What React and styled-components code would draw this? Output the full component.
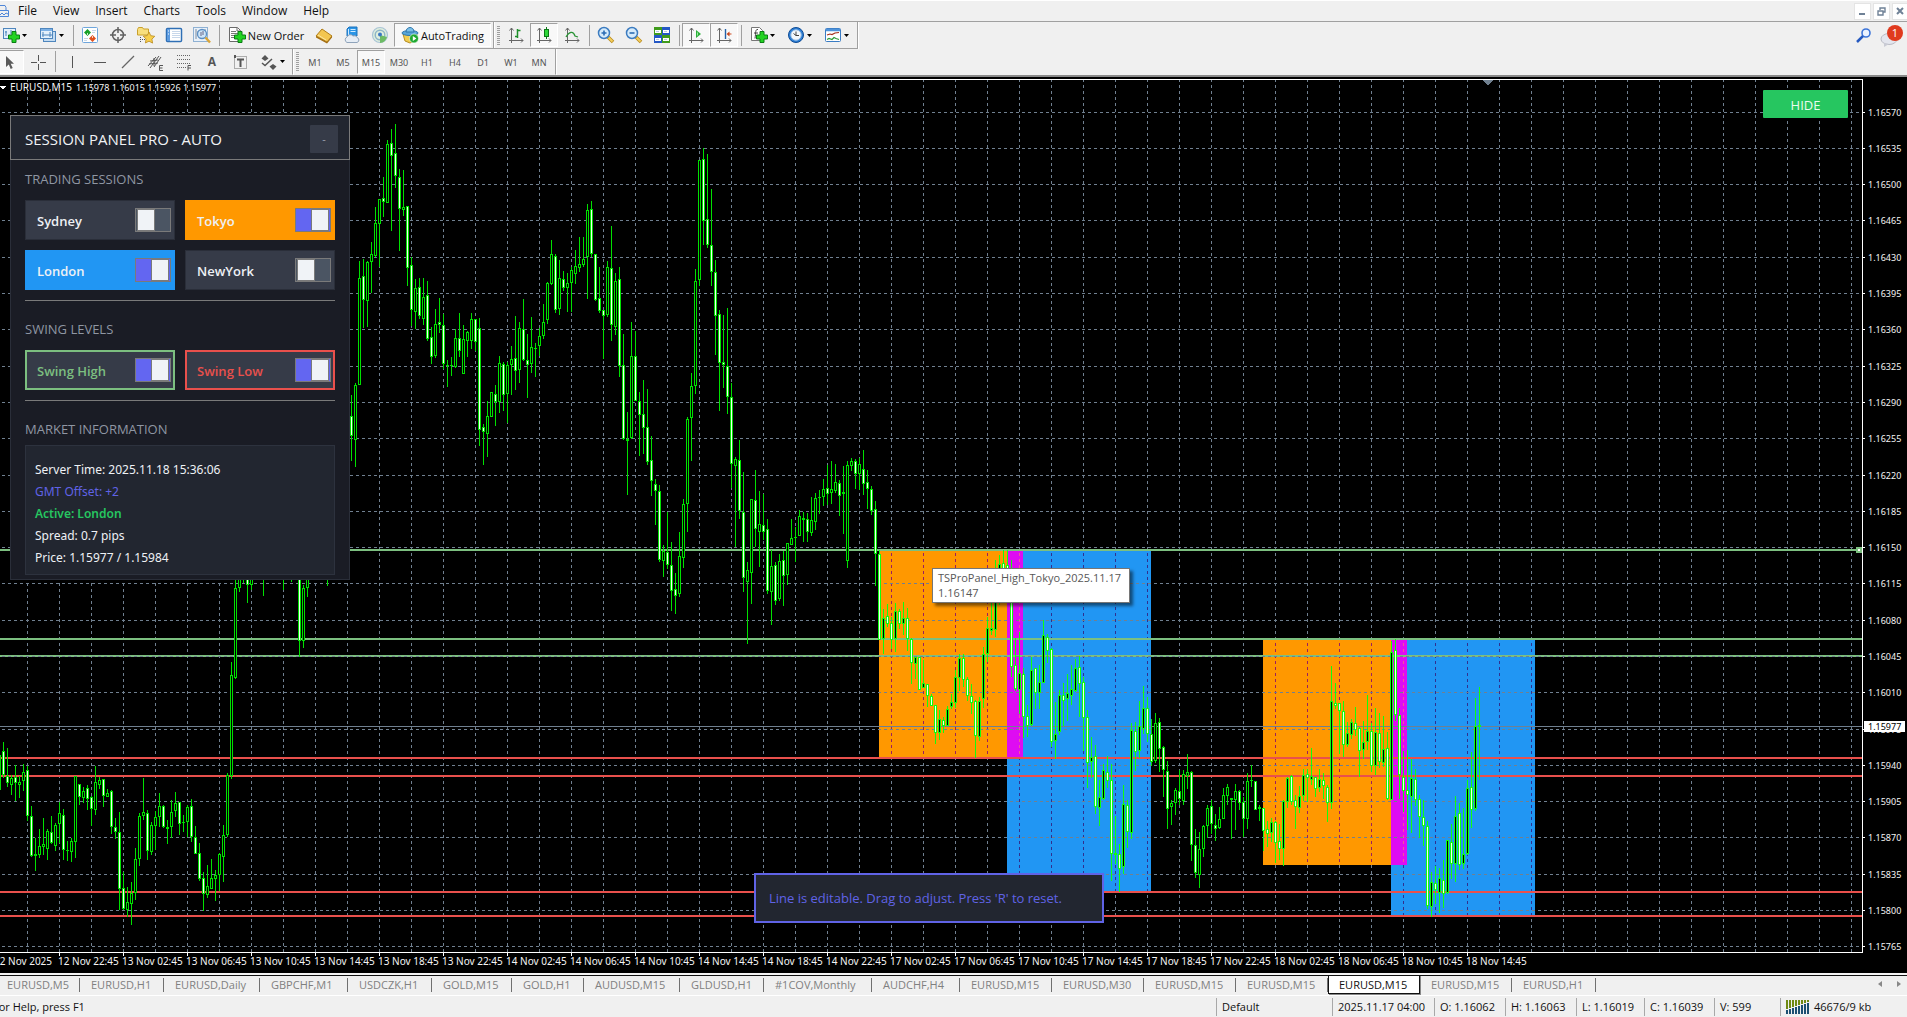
import React, { useState } from "react";
import styled, { createGlobalStyle, css } from "styled-components";

const GlobalStyle = createGlobalStyle`
  * {
    box-sizing: border-box;
  }
  body {
    margin: 0;
    background: #f0f0f0;
    font-family: "Open Sans", "Noto Sans", sans-serif;
    overflow: hidden;
  }
  button, input {
    font-family: inherit;
    margin: 0;
  }
`;

/////////////////////////////////////////////////////
// layout

const Window = styled.div`
  display: flex;
  flex-direction: column;
  height: 100vh;
  background: #f0f0f0;
  color: #111;
`;

const MenuBar = styled.nav`
  display: flex;
  align-items: center;
  height: 22px;
  border-top: 1px solid #fff;
  border-bottom: 1px solid #a0a0a0;
`;

const MenuItem = styled.button`
  border: none;
  background: transparent;
  padding: 0 8px;
  font-size: 12px;
  line-height: 16px;
  color: #111;
`;

const WindowButtons = styled.div`
  display: flex;
  gap: 2px;
  margin-left: auto;
  margin-right: -2px;
`;

const WindowButton = styled.button`
  display: flex;
  align-items: center;
  justify-content: center;
  width: 17px;
  height: 17px;
  padding: 0;
  border: 1px solid #e4e4e4;
  background: #fff;
`;

const ToolRow = styled.div`
  display: flex;
  align-items: center;
  height: ${p => p.$h || 27}px;
`;

const ToolGroup = styled.div`
  display: flex;
  align-items: center;
  height: ${p => (p.$flat ? 26 : 27)}px;
  padding-right: 2px;
  border-right: 1px solid #a0a0a0;
  border-bottom: 1px solid ${p => (p.$flat ? "transparent" : "#a0a0a0")};
  box-shadow: 1px 0 0 #fff;
`;

const pressed = css`
  background: #f8f8f8;
  border-color: #a0a0a0 #fff #fff #a0a0a0;
`;

const ToolButton = styled.button`
  display: flex;
  align-items: center;
  justify-content: center;
  flex: none;
  gap: 2px;
  width: ${p => p.$w || 28}px;
  height: 24px;
  padding: 0;
  border: 1px solid transparent;
  background: transparent;
  color: #111;
  font-size: 11px;
  white-space: nowrap;
  ${p => p.$on && pressed}
`;

const FrameButton = styled(ToolButton)`
  padding-top: 1px;
  color: #555;
  font-size: 9px;
  font-family: "Noto Sans", sans-serif;
`;

const LetterButton = styled(ToolButton)`
  color: #555;
  font-size: 12px;
  font-weight: 700;
`;

const Sep = styled.span`
  width: 1px;
  height: 21px;
  margin: 0 2px 0 3px;
  background: #a0a0a0;
`;

const Grip = styled.span`
  width: 3px;
  height: 19px;
  margin: 0 2px 0 3px;
  background: repeating-linear-gradient(#a0a0a0 0 1px, #f0f0f0 1px 2px);
`;

const TopRight = styled.div`
  display: flex;
  align-items: center;
  margin-left: auto;
  padding-right: 2px;
`;

const CutLeft = styled.div`
  display: flex;
  align-items: center;
  margin-left: -4px;
`;

const Chart = styled.main`
  position: relative;
  flex: 1;
  display: flex;
  flex-direction: column;
  min-height: 0;
  overflow: hidden;
  background: #000;
  border-top: 2px solid #8a8a8a;
`;

const Plot = styled.svg`
  display: block;
  width: 100%;
  flex: 1;
  shape-rendering: crispEdges;
  text {
    font-family: "Noto Sans", sans-serif;
    font-size: 9px;
    fill: #f4f4f4;
  }
  text.big {
    font-size: 10px;
  }
  text.tag {
    fill: #000;
  }
`;

const Tabs = styled.div`
  display: flex;
  align-items: flex-start;
  height: 23px;
  margin-left: -4px;
  border-top: 2px solid #f4f4f4;
  box-shadow: inset 0 1px 0 #111;
  border-bottom: 1px solid #fff;
`;

const Tab = styled.button`
  position: relative;
  flex: none;
  width: ${p => p.$w}px;
  height: ${p => (p.$on ? 19 : 20)}px;
  padding: 0 0 0 10px;
  border: 1px solid ${p => (p.$on ? "#111" : "transparent")};
  background: ${p => (p.$on ? "#fff" : "transparent")};
  color: ${p => (p.$on ? "#111" : "#808080")};
  font-size: 11px;
  line-height: 16px;
  text-align: left;
  white-space: nowrap;
  box-shadow: ${p => (p.$on ? "1px 1px 0 #888" : "none")};
  &::after {
    content: "";
    position: absolute;
    right: -1px;
    top: 2px;
    width: 1px;
    height: 14px;
    background: ${p => (p.$on ? "transparent" : "#707070")};
  }
`;

const TabArrows = styled.div`
  display: flex;
  gap: 15px;
  margin: 6px 6px 0 auto;
`;

const Status = styled.footer`
  display: flex;
  align-items: center;
  height: 21px;
  padding-top: 1px;
  font-size: 11px;
  line-height: 16px;
`;

const StatusText = styled.span`
  flex: 1;
  margin-left: -7px;
`;

const StatusCell = styled.span`
  display: flex;
  align-items: center;
  gap: 4px;
  flex: none;
  width: ${p => p.$w}px;
  height: 18px;
  padding-left: 5px;
  border-left: 1px solid #a8a8a8;
  white-space: nowrap;
`;

/////////////////////////////////////////////////////
// things lying over the chart

const Panel = styled.section`
  position: absolute;
  left: 10px;
  top: 38px;
  width: 340px;
  background: #1a1c25;
  border: 1px solid #2a2e39;
  border-top: none;
  padding-bottom: 4px;
`;

const PanelHead = styled.header`
  display: flex;
  align-items: center;
  justify-content: space-between;
  height: 45px;
  margin: 0 -1px;
  padding: 2px 11px 0 14px;
  background: #222630;
  border: 1px solid #7a7a7a;
`;

const PanelTitle = styled.h1`
  margin: 0;
  font-size: 15px;
  line-height: 20px;
  font-weight: 500;
  color: #f0f2f5;
`;

const Collapse = styled.button`
  width: 28px;
  height: 28px;
  padding: 0;
  border: none;
  border-radius: 1px;
  background: #363b48;
  color: #9aa2ae;
  font-size: 11px;
`;

const Group = styled.div`
  margin: 0 14px;
  padding: 0 0 ${p => (p.$last ? 0 : 10)}px;
  border-bottom: ${p => (p.$last ? "none" : "1px solid #7a7a7a")};
`;

const GroupTitle = styled.h2`
  display: flex;
  align-items: flex-end;
  margin: 0;
  height: ${p => p.$h}px;
  padding-bottom: ${p => p.$low}px;
  font-size: 13px;
  line-height: 20px;
  font-weight: 400;
  color: #8f96a3;
`;

const Tiles = styled.div`
  display: grid;
  grid-template-columns: 1fr 1fr;
  gap: 10px;
`;

const Tile = styled.label`
  display: flex;
  align-items: center;
  justify-content: space-between;
  height: 40px;
  padding: 0 ${p => (p.$line ? 2 : 3)}px 0 ${p => (p.$line ? 10 : 11)}px;
  background: ${p => p.$bg || "#363b48"};
  border: ${p => (p.$line ? `2px solid ${p.$line}` : `1px solid ${p.$bg || "#2a2e39"}`)};
  color: ${p => p.$line || "#eef1f5"};
  font-size: 13px;
  font-weight: 600;
`;

const TileName = styled.span`
  padding-top: 2px;
`;

const Switch = styled.input`
  appearance: none;
  display: flex;
  align-items: center;
  justify-content: flex-start;
  width: 36px;
  height: 24px;
  padding: 0 1px;
  border: 1px solid #7a7a7a;
  background: #4b5563;
  &::before {
    content: "";
    width: 16px;
    height: 20px;
    background: #f0f3f7;
    border: 1px solid #7a7a7a;
  }
  &:checked {
    justify-content: flex-end;
    background: #6366f1;
  }
`;

const InfoBox = styled.div`
  height: 130px;
  padding: 13px 9px 0;
  background: #222630;
  border: 1px solid #2d323e;
`;

const InfoLine = styled.p`
  margin: 0;
  font-family: "Noto Sans", sans-serif;
  font-size: 12px;
  line-height: 22px;
  font-weight: ${p => p.$weight || 400};
  color: ${p => p.$color || "#eef1f5"};
`;

const HideButton = styled.button`
  position: absolute;
  right: 59px;
  top: 13px;
  width: 85px;
  height: 28px;
  padding: 2px 0 0;
  border: none;
  border-radius: 1px;
  background: #26c660;
  color: #e9fbef;
  font-size: 13px;
  font-weight: 500;
`;

const Tip = styled.div`
  position: absolute;
  left: 932px;
  top: 491px;
  padding: 1px 8px 2px 5px;
  border: 1px solid #767676;
  background: #fff;
  color: #575757;
  font-size: 11px;
  line-height: 15px;
  white-space: nowrap;
  box-shadow: 3px 3px 3px rgba(0, 0, 0, 0.5);
`;

const Notice = styled.div`
  position: absolute;
  left: 754px;
  top: 796px;
  width: 350px;
  height: 50px;
  padding: 0 13px;
  line-height: 46px;
  border: 2px solid #6063e6;
  background: #222630;
  color: #6063e6;
  font-size: 13px;
  white-space: nowrap;
`;

/////////////////////////////////////////////////////
// price bars: high, body top, body bottom, low, d = falling / u = rising

const RUNS = [
  { first: -1, bars: `750 755 790 800 u,742 751 775 778 d,748 776 783 787 d,775 778 785 795 u,765 777 783 801 d,776 782 785 798 u,
764 772 781 791 u,766 770 816 821 d,806 816 856 857 d,838 854 856 871 u,829 846 855 858 u,818 844 847 855 u,829 831 849 860 u,
816 832 843 844 d,823 825 846 851 u,802 813 824 843 u,809 815 850 860 d,841 850 851 861 d,838 841 852 862 u,776 776 842 858 u,
784 784 797 805 d,787 791 798 803 u,785 788 799 810 d,796 797 809 826 d,766 782 810 815 u,777 780 785 789 u,779 779 796 807 d,
789 793 797 797 u,790 791 827 834 d,818 827 832 839 d,812 832 889 910 d,872 888 909 910 d,887 902 910 917 u,882 893 904 925 u,
848 859 893 900 u,813 816 859 866 u,778 812 816 820 u,810 813 851 860 d,822 825 852 855 u,811 817 826 850 u,793 806 817 827 u,
805 806 827 828 d,820 827 829 844 d,800 812 827 838 u,792 803 811 817 u,802 802 824 835 d,815 822 823 832 d,805 807 822 837 u,
799 806 837 842 d,826 837 854 854 d,843 853 879 881 d,872 878 894 911 d,865 886 895 898 u,859 878 889 889 u,870 875 879 901 u,
853 854 875 891 u,825 835 857 882 u,773 775 835 837 u,662 675 776 779 u,570 588 678 679 u,560 570 588 592 u,560 565 575 583 u,
560 570 585 603 d,560 565 585 590 u` },
  { first: 65, bars: `560 565 575 596 d` },
  { first: 70, bars: `560 565 575 590 d` },
  { first: 72, bars: `560 565 575 582 d` },
  { first: 74, bars: `560 570 641 657 d,585 588 641 648 u,560 570 588 597 u` },
  { first: 81, bars: `560 565 575 586 d` },
  { first: 87, bars: `395 416 436 461 d,383 385 440 467 u,261 278 385 385 u,259 276 300 328 d,261 262 301 327 u,242 254 262 293 u,
207 223 256 257 u,199 199 224 267 u,177 198 202 217 d,140 144 203 203 u,129 143 156 231 d,124 153 176 188 d,169 177 209 251 d,
170 207 210 216 u,206 206 268 286 d,257 265 310 326 d,279 288 312 329 u,278 287 316 319 d,278 297 319 325 u,281 295 339 341 d,
327 337 357 364 d,309 324 356 358 u,298 322 325 333 d,314 325 364 369 d,360 365 366 387 d,357 365 366 376 u,329 338 367 368 u,
313 338 351 357 d,325 339 374 374 u,331 332 341 357 u,313 319 341 349 u,319 319 342 351 d,318 328 430 446 d,424 427 432 465 d,
401 416 434 457 u,392 392 417 417 u,385 394 402 426 d,356 363 402 413 u,362 364 395 411 d,362 365 394 423 u,346 359 365 395 u,
316 358 371 390 d,322 328 370 383 u,299 329 360 361 d,334 360 365 398 d,317 347 364 373 u,343 348 349 377 u,328 336 346 356 u,
304 322 336 339 u,282 283 320 324 u,240 254 284 285 u,254 256 310 313 d,260 278 309 315 u,271 279 288 291 d,273 283 288 312 u,
267 270 283 312 u,250 266 274 284 u,237 264 268 272 u,237 259 265 267 u,204 210 257 299 u,201 209 254 257 d,254 254 300 301 d,
267 298 311 313 d,310 310 316 359 d,261 267 315 317 u,226 268 325 341 d,273 281 327 335 u,267 279 366 377 d,334 365 439 440 d,
412 439 441 495 d,322 356 438 439 u,331 356 401 401 d,392 401 415 456 d,380 414 428 454 d,389 427 462 465 d,436 460 481 496 d,
479 484 491 525 d,485 491 560 562 d,545 551 561 577 u,512 552 565 569 d,542 565 591 611 d,573 589 596 614 d,532 556 594 597 u,
499 504 558 568 u,417 419 504 532 u,373 386 418 461 u,269 281 386 394 u,160 160 280 286 u,148 159 221 245 d,154 219 245 248 d,
189 245 272 286 d,260 272 316 355 d,310 314 363 411 d,315 362 365 388 d,308 366 397 414 d,383 397 464 488 d,457 459 466 547 u,
440 460 511 519 d,472 512 578 592 d,562 570 582 644 u,499 499 573 604 u,470 500 529 547 d,491 524 532 567 u,494 525 532 540 d,
519 529 591 594 d,550 566 592 625 u,562 565 601 605 d,554 561 599 601 u,551 560 576 606 d,543 543 575 585 u,519 538 545 545 u,
527 537 538 562 u,510 516 536 536 u,512 518 520 542 d,513 519 532 542 d,497 520 533 536 u,493 498 522 530 u,490 497 498 514 u,
479 489 497 506 u,465 488 494 505 d,461 489 493 504 u,464 482 491 493 u,480 483 496 516 d,466 492 494 534 d,461 465 561 568 u,
458 461 466 471 u,459 461 474 489 d,458 464 474 490 u,450 469 484 495 d,470 482 489 509 d,486 489 511 515 d,501 509 554 586 d,
550 554 640 640 d,609 618 639 654 u,604 616 624 627 d,617 623 640 649 d,603 611 639 652 u,609 611 624 629 d,602 618 624 635 u,
608 618 639 651 d,638 639 663 684 d,657 657 664 679 u,657 657 690 690 d,660 683 688 688 u,684 684 696 707 d,694 696 706 706 d,
705 705 733 744 d,710 719 733 740 u,717 720 726 733 d,706 709 726 726 u,694 702 707 709 u,670 677 703 708 u,654 658 678 691 u,
654 658 680 687 d,677 679 696 701 d,684 696 703 714 d,700 701 736 758 d,697 701 737 741 u,647 654 699 708 u,617 628 654 662 u,
603 628 631 635 u,560 590 630 637 u,555 564 600 605 u,550 563 590 600 d,550 565 590 600 d,560 580 667 677 d,638 665 689 691 d,
632 673 690 714 u,668 674 717 738 d,705 716 726 737 d,657 670 725 726 u,668 668 693 709 d,665 682 693 709 u,620 635 683 683 u,
634 637 651 663 d,648 649 742 747 d,702 734 741 759 u,690 695 732 735 u,683 695 701 726 d,674 693 699 721 u,665 689 696 705 u,
659 668 691 692 u,656 667 684 717 d,677 682 718 751 d,710 717 763 788 d,737 757 762 778 u,745 756 807 814 d,780 797 808 826 u,
764 770 799 800 u,756 772 781 788 d,764 780 854 881 d,816 853 855 864 u,844 854 869 892 d,785 804 867 874 u,800 805 832 848 d,
723 730 833 839 u,722 731 752 771 d,701 726 751 758 u,686 708 729 734 u,697 708 734 742 d,719 734 762 766 d,713 723 761 763 u,
718 722 749 772 d,746 747 770 797 d,761 771 809 829 d,800 803 807 825 u,788 790 803 815 u,770 791 799 805 d,770 774 801 805 u,
754 772 776 789 u,771 772 845 861 d,829 845 873 878 d,832 849 875 888 u,825 826 849 857 u,805 808 826 838 u,800 806 824 834 d,
814 825 829 841 d,807 819 828 829 u,788 795 819 819 u,784 787 796 805 u,798 798 800 839 d,784 791 800 830 u,790 791 803 810 d,
797 802 819 837 d,773 781 819 829 u,765 780 781 787 u,781 781 810 810 d,805 807 809 821 d,808 808 831 851 d,821 829 834 847 d,
818 822 833 842 u,821 822 843 863 d,824 841 849 860 d,800 801 849 866 u,777 778 802 808 u,775 776 802 805 d,795 800 807 829 d,
786 796 808 813 u,769 775 796 801 u,769 774 778 802 d,748 776 780 785 u,777 777 789 797 d,769 779 788 792 u,773 780 786 799 d,
785 787 803 822 d,666 701 803 809 u,683 703 706 709 d,703 703 711 754 d,701 711 745 757 d,722 733 745 747 u,719 722 735 739 u,
707 723 730 736 d,727 728 751 777 d,721 742 750 759 u,695 731 742 750 u,723 731 766 772 d,708 732 766 775 u,713 733 762 768 d,
716 749 763 767 u,732 748 799 800 d,641 652 800 800 u,639 650 715 721 d,708 715 775 799 d,751 777 791 812 d,750 790 795 830 d,
759 778 797 833 u,769 779 800 806 d,795 799 817 838 d,800 817 826 846 d,821 826 906 909 d,872 882 907 917 u,866 883 890 904 d,
868 878 893 913 u,860 880 894 908 d,840 840 893 894 u,824 842 864 879 d,796 816 864 882 u,803 813 865 870 d,808 854 864 869 u,
780 788 854 855 u,752 787 810 828 d,698 726 809 811 u,687 725 727 780 u` },
];

const SESSIONS = [
  { x: 879, y: 551, w: 128, h: 206, fill: "#ff9800", grid: "#9a1f5e" },
  { x: 1007, y: 551, w: 144, h: 340, fill: "#2196f3", grid: "#312f8f" },
  { x: 1007, y: 551, w: 16, h: 206, fill: "#de0cf2", grid: "#f0559b" },
  { x: 1263, y: 640, w: 128, h: 225, fill: "#ff9800", grid: "#9a1f5e" },
  { x: 1391, y: 640, w: 144, h: 275, fill: "#2196f3", grid: "#312f8f" },
  { x: 1391, y: 640, w: 16, h: 225, fill: "#de0cf2", grid: "#f0559b" },
];

const HIGHS = [549, 638, 655];
const LOWS = [757, 775, 891, 915];

const PRICE_Y = [112, 148, 184, 220, 257, 293, 329, 366, 402, 438, 475, 511, 547, 583, 620, 656, 692, 729, 765, 801, 837, 874, 910, 946];
const COLUMNS = Array.from({ length: 58 }, (_, i) => 27 + i * 32);

const TIMES = [
  "12 Nov 2025", "12 Nov 22:45", "13 Nov 02:45", "13 Nov 06:45", "13 Nov 10:45", "13 Nov 14:45", "13 Nov 18:45",
  "13 Nov 22:45", "14 Nov 02:45", "14 Nov 06:45", "14 Nov 10:45", "14 Nov 14:45", "14 Nov 18:45", "14 Nov 22:45",
  "17 Nov 02:45", "17 Nov 06:45", "17 Nov 10:45", "17 Nov 14:45", "17 Nov 18:45", "17 Nov 22:45", "18 Nov 02:45",
  "18 Nov 06:45", "18 Nov 10:45", "18 Nov 14:45",
];

const TABS = [
  ["EURUSD,M5", 84], ["EURUSD,H1", 84], ["EURUSD,Daily", 96], ["GBPCHF,M1", 88], ["USDCZK,H1", 84],
  ["GOLD,M15", 80], ["GOLD,H1", 72], ["AUDUSD,M15", 96], ["GLDUSD,H1", 84], ["#1COV,Monthly", 108],
  ["AUDCHF,H4", 88], ["EURUSD,M15", 92], ["EURUSD,M30", 92], ["EURUSD,M15", 92], ["EURUSD,M15", 92],
  ["EURUSD,M15", 92], ["EURUSD,M15", 92], ["EURUSD,H1", 84],
];

const inSession = (x) => (x >= 879 && x < 1151) || (x >= 1263 && x < 1535);

const Candles = () =>
  RUNS.map(run =>
    run.bars.split(",").map((bar, n) => {
      const [high, top, bottom, low, dir] = bar.trim().split(" ");
      const x = 3 + 4 * (run.first + n);
      const green = inSession(x) ? "#10ff10" : "#00e000";
      const h = Math.max(1, bottom - top);
      return (
        <g key={x}>
          <rect x={x} y={high} width="1" height={low - high} fill={green} />
          <rect x={x - 1} y={top} width="3" height={h} fill={green} />
          {h > 2 && (
            <rect x={x} y={Number(top) + 1} width="1" height={h - 2} fill={dir === "d" ? "#f2fff0" : "#000"} />
          )}
        </g>
      );
    })
  );

const PriceChart = () => (
  <Plot>
    <g transform="translate(0,-77)">
      {SESSIONS.map((s, i) => <rect key={i} x={s.x} y={s.y} width={s.w} height={s.h} fill={s.fill} />)}
      {COLUMNS.map(x => (
        <line key={x} x1={x + 0.5} x2={x + 0.5} y1="79" y2="952" stroke="#708090" strokeDasharray="3 3" />
      ))}
      {SESSIONS.map((s, i) =>
        COLUMNS.filter(x => x >= s.x && x < s.x + s.w).map(x => (
          <line
            key={i + "-" + x}
            x1={x + 0.5}
            x2={x + 0.5}
            y1={s.y}
            y2={s.y + s.h}
            stroke={s.grid}
            strokeDasharray="3 3"
            strokeDashoffset={(s.y - 79) % 6}
          />
        ))
      )}
      {HIGHS.map(y => <rect key={y} x="0" y={y} width="1862" height="2" fill="#7cbf80" />)}
      {LOWS.map(y => <rect key={y} x="0" y={y} width="1862" height="2" fill="#e9504c" />)}
      {PRICE_Y.map(y => (
        <line key={y} x1="2" x2="1862" y1={y + 0.5} y2={y + 0.5} stroke="#708090" strokeDasharray="3 3" />
      ))}
      <rect x="0" y="726" width="1862" height="1" fill="#708090" />
      <Candles />
      <path d="M0 79.5H1862.5V952.5H0" fill="none" stroke="#fff" />
      <path d="M1482 80h11l-5 5h-1z" fill="#708090" />
      <path d="M0 86h6l-3 4z" fill="#fff" />
      <rect x="1856" y="547" width="6" height="6" fill="#7cbf80" />
      <rect x="1858" y="549" width="2" height="2" fill="#fff" />
      <text className="big" x="10" y="91">EURUSD,M15</text>
      <text x="76" y="91">1.15978 1.16015 1.15926 1.15977</text>
      {PRICE_Y.map((y, i) => (
        <g key={y}>
          <rect x="1863" y={y} width="2" height="1" fill="#fff" />
          <text x="1868" y={y + 4}>{(1.1657 - i * 0.00035).toFixed(5)}</text>
        </g>
      ))}
      <rect x="1864" y="721" width="41" height="11" fill="#fff" />
      <text className="tag" x="1868" y="730">1.15977</text>
      {TIMES.map((t, i) => (
        <g key={t}>
          <rect x={-5 + i * 64} y="953" width="1" height="3" fill="#fff" />
          <text className="big" x={-6 + i * 64} y="965">{t}</text>
        </g>
      ))}
    </g>
  </Plot>
);

/////////////////////////////////////////////////////
// icons

const Icon = ({ children, w = 18 }) => (
  <svg width={w} height="18" viewBox={`0 0 ${w} 18`} fill="none" aria-hidden="true">{children}</svg>
);

const Plus = ({ x = 6, y = 5 }) => (
  <path
    transform={`translate(${x},${y})`}
    d="M4 0.5h4v3.5h3.5v4H8v3.5H4V8H0.5V4H4z"
    fill="#22d322"
    stroke="#0a7d14"
  />
);

const Axes = () => (
  <path d="M4.500 2v15M2 14.500h14M2.500 4.500l2-2.500 2 2.500M14 12.500l2 2-2 2" stroke="#666" />
);

const Arrow = () => (
  <svg width="5" height="3" viewBox="0 0 5 3" aria-hidden="true"><path d="M0 0h5L2.500 3z" fill="#000" /></svg>
);

const icons = {
  newChart: <Icon><rect x="1.500" y="2.500" width="12" height="10" fill="#e3f0fb" stroke="#4f86bd" /><path d="M4 5v5M3 6h2M9 4v4" stroke="#4f86bd" /><Plus /></Icon>,
  profiles: <Icon><rect x="4.500" y="5.500" width="12" height="10" fill="#c4dcf2" stroke="#4f86bd" /><rect x="1.500" y="2.500" width="12" height="10" fill="#e3f0fb" stroke="#4f86bd" /><path d="M2 4h11" stroke="#7db1e6" strokeWidth="2" /><path d="M4 6v5M3 9h10M11 6v5" stroke="#4f86bd" /></Icon>,
  market: <Icon><rect x="1.500" y="1.500" width="15" height="15" rx="1" fill="#fff" stroke="#6fa6dc" /><path d="M11 4.500h4M11 6.500h3M3 12.500h4M3 14.500h3" stroke="#c8d7e8" /><path d="M6.500 3l3.500 3.500L6.500 10 3 6.500z" fill="#18a028" /><path d="M11.500 9l3.500 3.500-3.500 3.500L8 12.500z" fill="#e0521f" /><path d="M6 8h1M11 11h1" stroke="#fff" strokeWidth="1.500" /></Icon>,
  cross: <Icon><circle cx="9" cy="9" r="5.500" stroke="#606060" strokeWidth="1.500" /><path d="M9 1v6M9 11v6M1 9h6M11 9h6" stroke="#606060" strokeWidth="1.500" /></Icon>,
  folder: <Icon><path d="M0.500 3.500l1-2h4l1 1.500h5v6h-11z" fill="#f8df7e" stroke="#c9a02d" /><path d="M3.500 11v5M3 13.500h5" stroke="#555" strokeDasharray="1 1" /><path d="M12 6l1.800 3.700 4 .6-2.900 2.800.7 4L12 15.200 8.400 17l.7-4-2.900-2.800 4-.6z" fill="#f7cf4d" stroke="#b98a1c" strokeWidth=".8" /></Icon>,
  navigator: <Icon><rect x="1.500" y="2.500" width="15" height="13" rx="1" fill="#fff" stroke="#2f6fb5" strokeWidth="1.500" /><rect x="2" y="3" width="3" height="12" fill="#5c9be0" /><path d="M7 5.500h8M7 7.500h8M7 9.500h8M7 11.500h8" stroke="#c7d7ea" /><path d="M3 5h1M3 8h1" stroke="#fff" /></Icon>,
  tester: <Icon><rect x="0.500" y="1.500" width="14" height="14" fill="#e9f1f9" stroke="#8fb1d3" /><path d="M3 3v10M5 5v5M12 3v6" stroke="#7d8da0" /><circle cx="9" cy="8" r="4.500" fill="#cfe6f9" stroke="#5b8fc4" strokeWidth="1.300" /><path d="M8 6v4M10 5v4" stroke="#668" /><path d="M12.500 11.500l4.500 5" stroke="#d9a63b" strokeWidth="2.500" /></Icon>,
  order: <Icon><path d="M1.500 1.500h8l3 3v11h-11z" fill="#fff" stroke="#6a6a6a" /><path d="M9 2v3h3" stroke="#6a6a6a" /><path d="M3 5.500h5M3 7.500h7M3 9.500h5M3 11.500h3" stroke="#7a7a7a" /><Plus /></Icon>,
  book: <Icon><path d="M7 3l10 7-5 6L1 10z" fill="#f3c650" stroke="#b07d18" /><path d="M1 10v1.500L12 17.500l5-6V10l-5 6z" fill="#a36d10" /><path d="M3 9l8 5" stroke="#fce7a4" /></Icon>,
  cloud: <Icon><path d="M4 3l2-2h8v9H4z" fill="#2b95e6" stroke="#1c73bd" /><path d="M7.500 3.500h5M7.500 5.500h5M5.500 3v7" stroke="#cfeaff" /><path d="M4 16.500a3 3 0 0 1 0-5.500 3.500 3.500 0 0 1 6-1 3 3 0 0 1 4 1.500 2.600 2.600 0 0 1 0 5z" fill="#e6edf5" stroke="#8fa3ba" /></Icon>,
  signal: <Icon><circle cx="9" cy="9" r="7.500" fill="#dfeedd" stroke="#a9c4d6" strokeWidth="1.200" /><circle cx="9" cy="9" r="4.800" stroke="#8db4c8" strokeWidth="1.400" /><path d="M9 9v8a8 8 0 0 0 7-6z" fill="#6dbb64" /><circle cx="9" cy="8.500" r="2" fill="#3b77c2" /></Icon>,
  robot: <Icon><path d="M2 8h14l-3 7-4 2-5-2z" fill="#f2cd4f" stroke="#b58e22" /><ellipse cx="9" cy="7" rx="8" ry="2.500" fill="#58a6d8" stroke="#2f76ab" /><path d="M5 6c0-6 8-6 8 0z" fill="#7cc0e8" stroke="#2f76ab" /><circle cx="13" cy="12.500" r="4.500" fill="#1fa931" stroke="#fff" strokeWidth=".6" /><path d="M11.800 10l3.600 2.500-3.600 2.500z" fill="#fff" /></Icon>,
  bars: <Icon><Axes /><path d="M10.500 3v9M8 10.500h3M11 4.500h2.500" stroke="#1e8f2a" strokeWidth="1.500" /></Icon>,
  candles: <Icon><Axes /><path d="M11.500 1v12" stroke="#0c7a18" /><rect x="9.500" y="3.500" width="4" height="7" fill="#2fd83a" stroke="#0c7a18" /></Icon>,
  line: <Icon><Axes /><path d="M3 11c3-5 7-7 9-1l3 1" stroke="#2a9436" strokeWidth="1.300" /></Icon>,
  zoomIn: <Icon><path d="M11 11l5 5" stroke="#b98a1c" strokeWidth="3.500" /><path d="M11.500 11.500l4 4" stroke="#f4cf5e" strokeWidth="2" /><circle cx="7" cy="7" r="5.500" fill="#d6ebfb" stroke="#3c7cc0" strokeWidth="1.500" /><path d="M7 4.500v5M4.500 7h5" stroke="#2a6cb4" strokeWidth="1.600" /></Icon>,
  zoomOut: <Icon><path d="M11 11l5 5" stroke="#b98a1c" strokeWidth="3.500" /><path d="M11.500 11.500l4 4" stroke="#f4cf5e" strokeWidth="2" /><circle cx="7" cy="7" r="5.500" fill="#d6ebfb" stroke="#3c7cc0" strokeWidth="1.500" /><path d="M4.500 7h5" stroke="#2a6cb4" strokeWidth="1.600" /></Icon>,
  tile: <Icon><rect x="1" y="1" width="8" height="8" fill="#3f9b1c" /><rect x="9" y="1" width="8" height="8" fill="#2457c5" /><rect x="1" y="9" width="8" height="8" fill="#2457c5" /><rect x="9" y="9" width="8" height="8" fill="#3f9b1c" /><path d="M2 5.500h6M10 5.500h6M2 13.500h6M10 13.500h6" stroke="#fff" strokeWidth="3" /><path d="M3 5.500h3M11 5.500h3M3 13.500h3M11 13.500h3" stroke="#b9cbe8" /></Icon>,
  scroll: <Icon><Axes /><path d="M9 4l5 4-5 4z" fill="#2bb038" /><path d="M10.500 6.500v3" stroke="#9be7a2" /></Icon>,
  shift: <Icon><Axes /><path d="M10.500 3v10" stroke="#2360a8" strokeWidth="1.400" /><path d="M11.500 8l3-2.500v2h2v1h-2v2z" fill="#c9471c" /></Icon>,
  indicator: <Icon><path d="M1.500 1.500h8l3 3v10h-11z" fill="#fff" stroke="#777" /><path d="M8 3.500c-3-.5-2 3-3 9M4 7h4" stroke="#444" /><Plus /></Icon>,
  clock: <Icon><circle cx="9" cy="9" r="7.500" fill="#2d7fd6" stroke="#0f4b94" /><circle cx="9" cy="9" r="5.200" fill="#f3f8fd" stroke="#9fc0e4" /><path d="M9 5.500V9.500H12M6.500 7.500L9 9.500" stroke="#444" /></Icon>,
  template: <Icon><rect x="1.500" y="2.500" width="15" height="13" rx="1" fill="#fff" stroke="#3a7cc4" /><path d="M2 4h14" stroke="#4f93da" strokeWidth="2.500" /><path d="M3 9l3-1 2 .5 3-1.500 4-.5" stroke="#a5301c" strokeWidth="1.200" /><path d="M3 13.500l2-1 3 1 2-2 2 1 3 1" stroke="#2b9a35" strokeWidth="1.200" /></Icon>,
  cursor: <Icon><path d="M5 3v11l2.800-2.600L9.700 16l2-.9-2-4.300H13z" fill="#5a5a5a" /></Icon>,
  plusThin: <Icon><path d="M9.500 2v6M9.500 11v6M2 9.500h6M11 9.500h6" stroke="#555" /></Icon>,
  vline: <Icon><path d="M9.500 3v12" stroke="#555" /></Icon>,
  hline: <Icon><path d="M3 9.500h12" stroke="#555" /></Icon>,
  trend: <Icon><path d="M3 15L15 3" stroke="#666" strokeWidth="1.300" /></Icon>,
  channel: <Icon><path d="M1 13L9 4M3 15L12 3M7 14L14 4M3 8l8-1M2 11l9-1M7 5v8" stroke="#555" /><path d="M16 12.500h-3.500v5H16M12.500 15h3" stroke="#555" /></Icon>,
  fibo: <Icon><path d="M2 2.500h14M2 6.500h14M2 10.500h14M2 14.500h9" stroke="#666" strokeDasharray="1 1" /><path d="M16 12.500h-3v5M13 15h3" stroke="#555" /></Icon>,
  label: <Icon><rect x="3.500" y="3.500" width="12" height="12" stroke="#666" strokeDasharray="1 1" /><path d="M6 6.500h7M9.500 6v8" stroke="#555" strokeWidth="2" /><path d="M3 2h2v3H3z" fill="#555" /></Icon>,
  arrows: <Icon><path d="M5 2l3.500 3.500L5 8 1.500 5.500z" fill="#555" /><path d="M13 11l3.500 2.500L13 17l-3.500-3.500z" fill="#555" /><path d="M2 10l3 2.500L12 6" stroke="#555" strokeWidth="1.500" /></Icon>,
};

const Tool = ({ name, on, drop, w, text }) => (
  <ToolButton $on={on} $w={w || (drop ? 37 : 28)} aria-label={name} title={name}>
    {icons[name]}
    {text}
    {drop && <Arrow />}
  </ToolButton>
);

const SignalBars = () => (
  <svg width="24" height="14" viewBox="0 0 24 14" aria-hidden="true">
    {[0, 1, 2, 3, 4, 5, 6, 7].map(i => (
      <g key={i}>
        <rect x={i * 3} y="0" width="2" height={9 - i} fill="#6f8a12" />
        <rect x={i * 3} y={10 - i} width="2" height={4 + i} fill="#1b4f72" />
      </g>
    ))}
  </svg>
);

/////////////////////////////////////////////////////

const SessionPanel = () => {
  const [on, setOn] = useState({
    Sydney: false,
    Tokyo: true,
    London: true,
    NewYork: false,
    "Swing High": true,
    "Swing Low": true,
  });

  const tile = (name, bg, line) => (
    <Tile $bg={on[name] ? bg : undefined} $line={line}>
      <TileName>{name}</TileName>
      <Switch
        type="checkbox"
        checked={on[name]}
        onChange={e => setOn({ ...on, [name]: e.target.checked })}
      />
    </Tile>
  );

  return (
    <Panel>
      <PanelHead>
        <PanelTitle>SESSION PANEL PRO - AUTO</PanelTitle>
        <Collapse>-</Collapse>
      </PanelHead>
      <Group>
        <GroupTitle $h={40} $low={11}>TRADING SESSIONS</GroupTitle>
        <Tiles>
          {tile("Sydney")}
          {tile("Tokyo", "#ff9800")}
          {tile("London", "#2196f3")}
          {tile("NewYork")}
        </Tiles>
      </Group>
      <Group>
        <GroupTitle $h={49} $low={11}>SWING LEVELS</GroupTitle>
        <Tiles>
          {tile("Swing High", undefined, "#7cbf80")}
          {tile("Swing Low", undefined, "#e9504c")}
        </Tiles>
      </Group>
      <Group $last>
        <GroupTitle $h={44} $low={6}>MARKET INFORMATION</GroupTitle>
        <InfoBox>
          <InfoLine>Server Time: 2025.11.18 15:36:06</InfoLine>
          <InfoLine $color="#6063e6">GMT Offset: +2</InfoLine>
          <InfoLine $color="#26c660" $weight={600}>Active: London</InfoLine>
          <InfoLine>Spread: 0.7 pips</InfoLine>
          <InfoLine>Price: 1.15977 / 1.15984</InfoLine>
        </InfoBox>
      </Group>
    </Panel>
  );
};

const App = () => {
  const [tab, setTab] = useState(15);

  return (
    <Window>
      <GlobalStyle />
      <MenuBar>
        <svg width="10" height="16" viewBox="0 0 10 16" fill="none" aria-hidden="true">
          <path d="M0 2.500h5l1 2v3M0 7.500h8.500v6H0M0 12l2-2 2 2 2-2 2 1" stroke="#4f86d8" />
        </svg>
        {["File", "View", "Insert", "Charts", "Tools", "Window", "Help"].map(m => <MenuItem key={m}>{m}</MenuItem>)}
        <WindowButtons>
          <WindowButton aria-label="Minimize">
            <svg width="9" height="9"><path d="M1 7h6" stroke="#6f8196" strokeWidth="2" /></svg>
          </WindowButton>
          <WindowButton aria-label="Restore">
            <svg width="9" height="9" fill="none"><path d="M3 3V1h5v4H6M1 4h5v4H1z" stroke="#6f8196" strokeWidth="1.400" /></svg>
          </WindowButton>
          <WindowButton aria-label="Close">
            <svg width="9" height="9"><path d="M1 1l6 6M7 1L1 7" stroke="#6f8196" strokeWidth="2" /></svg>
          </WindowButton>
        </WindowButtons>
      </MenuBar>

      <ToolRow>
        <CutLeft>
          <ToolGroup>
            <Tool name="newChart" drop />
            <Tool name="profiles" drop />
            <Sep />
            <Tool name="market" />
            <Tool name="cross" />
            <Tool name="folder" />
            <Tool name="navigator" />
            <Tool name="tester" />
            <Sep />
            <Tool name="order" w={88} text="New Order" />
            <Tool name="book" />
            <Tool name="cloud" />
            <Tool name="signal" />
            <Tool name="robot" on w={97} text="AutoTrading" />
          </ToolGroup>
          <ToolGroup>
            <Grip />
            <Tool name="bars" />
            <Tool name="candles" on />
            <Tool name="line" />
            <Sep />
            <Tool name="zoomIn" />
            <Tool name="zoomOut" />
            <Tool name="tile" />
            <Sep />
            <Tool name="scroll" on />
            <Tool name="shift" on />
            <Sep />
            <Tool name="indicator" drop />
            <Tool name="clock" drop />
            <Tool name="template" drop />
          </ToolGroup>
        </CutLeft>
        <TopRight>
          <svg width="52" height="24" viewBox="0 0 52 24" fill="none">
            <circle cx="13" cy="9" r="4" stroke="#3c74d8" strokeWidth="1.600" fill="#eaf2ff" />
            <path d="M10 12l-6 6" stroke="#2559c0" strokeWidth="2.500" />
            <ellipse cx="36" cy="15" rx="8" ry="5.500" fill="#e4e6ee" stroke="#b9bbc4" />
            <path d="M31 19v4l5-3z" fill="#c9cbd4" />
            <circle cx="42" cy="9" r="8" fill="#e03a1e" />
            <text x="42" y="13" textAnchor="middle" fontSize="11" fill="#fff">1</text>
          </svg>
        </TopRight>
      </ToolRow>

      <ToolRow $h={26}>
        <CutLeft>
          <ToolGroup $flat>
            <Tool name="cursor" on />
            <Tool name="plusThin" />
            <Sep />
            <Tool name="vline" />
            <Tool name="hline" />
            <Tool name="trend" />
            <Tool name="channel" />
            <Tool name="fibo" />
            <LetterButton>A</LetterButton>
            <Tool name="label" />
            <Tool name="arrows" drop w={36} />
          </ToolGroup>
          <ToolGroup $flat>
            <Grip />
            {["M1", "M5", "M15", "M30", "H1", "H4", "D1", "W1", "MN"].map(f => (
              <FrameButton key={f} $on={f === "M15"}>{f}</FrameButton>
            ))}
          </ToolGroup>
        </CutLeft>
      </ToolRow>

      <Chart>
        <PriceChart />
        <SessionPanel />
        <HideButton>HIDE</HideButton>
        <Tip>
          TSProPanel_High_Tokyo_2025.11.17
          <br />
          1.16147
        </Tip>
        <Notice>Line is editable. Drag to adjust. Press 'R' to reset.</Notice>
      </Chart>

      <Tabs>
        {TABS.map(([name, w], i) => (
          <Tab key={i} $w={w} $on={i === tab} onClick={() => setTab(i)}>{name}</Tab>
        ))}
        <TabArrows>
          <svg width="4" height="6"><path d="M4 0v6L0 3z" fill="#888" /></svg>
          <svg width="4" height="6"><path d="M0 0v6l4-3z" fill="#888" /></svg>
        </TabArrows>
      </Tabs>

      <Status>
        <StatusText>For Help, press F1</StatusText>
        <StatusCell $w={116}>Default</StatusCell>
        <StatusCell $w={102}>2025.11.17 04:00</StatusCell>
        <StatusCell $w={71}>O: 1.16062</StatusCell>
        <StatusCell $w={71}>H: 1.16063</StatusCell>
        <StatusCell $w={68}>L: 1.16019</StatusCell>
        <StatusCell $w={70}>C: 1.16039</StatusCell>
        <StatusCell $w={66}>V: 599</StatusCell>
        <StatusCell $w={127}>
          <SignalBars />
          46676/9 kb
        </StatusCell>
      </Status>
    </Window>
  );
};

export default App;
